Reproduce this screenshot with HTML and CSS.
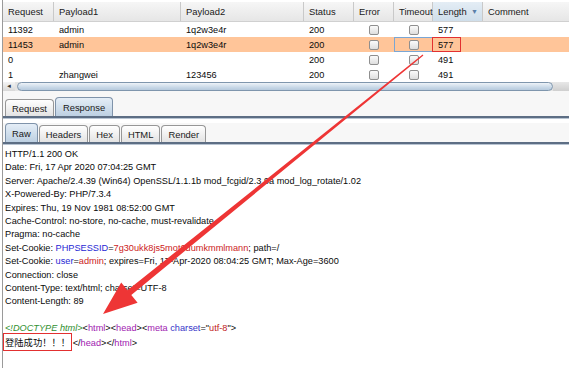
FILE: index.html
```html
<!DOCTYPE html>
<html>
<head>
<meta charset="utf-8">
<link rel="stylesheet" href="styles.css">
</head>
<body>
<div class="frame">
  <div class="grid head">
    <div class="hc">Request</div>
    <div class="hc">Payload1</div>
    <div class="hc">Payload2</div>
    <div class="hc">Status</div>
    <div class="hc">Error</div>
    <div class="hc">Timeout</div>
    <div class="hc sorted"><span>Length</span><span class="sort">▼</span></div>
    <div class="hc last">Comment</div>
  </div>
  <div class="grid row">
    <div class="c">11392</div><div class="c">admin</div><div class="c">1q2w3e4r</div><div class="c">200</div>
    <div class="c cb"><i class="box"></i></div><div class="c cb"><i class="box"></i></div><div class="c">577</div><div class="c"></div>
  </div>
  <div class="grid row sel">
    <div class="c">11453</div><div class="c">admin</div><div class="c">1q2w3e4r</div><div class="c">200</div>
    <div class="c cb"><i class="box"></i></div><div class="c cb focus"><i class="box"></i></div><div class="c mark">577</div><div class="c"></div>
  </div>
  <div class="grid row">
    <div class="c">0</div><div class="c"></div><div class="c"></div><div class="c">200</div>
    <div class="c cb"><i class="box"></i></div><div class="c cb"><i class="box"></i></div><div class="c">491</div><div class="c"></div>
  </div>
  <div class="grid row">
    <div class="c">1</div><div class="c">zhangwei</div><div class="c">123456</div><div class="c">200</div>
    <div class="c cb"><i class="box"></i></div><div class="c cb"><i class="box"></i></div><div class="c">491</div><div class="c"></div>
  </div>
  <div class="hscroll">
    <div class="sbtn">◄</div>
    <div class="thumb"></div>
    <div class="track"></div>
  </div>
  <div class="tabbar main">
    <div class="tab">Request</div>
    <div class="tab on">Response</div>
  </div>
  <div class="tabbar sub">
    <div class="tab on">Raw</div>
    <div class="tab">Headers</div>
    <div class="tab">Hex</div>
    <div class="tab">HTML</div>
    <div class="tab">Render</div>
  </div>
  <div class="raw">
    <div class="ln">HTTP/1.1 200 OK</div>
    <div class="ln">Date: Fri, 17 Apr 2020 07:04:25 GMT</div>
    <div class="ln">Server: Apache/2.4.39 (Win64) OpenSSL/1.1.1b mod_fcgid/2.3.9a mod_log_rotate/1.02</div>
    <div class="ln">X-Powered-By: PHP/7.3.4</div>
    <div class="ln">Expires: Thu, 19 Nov 1981 08:52:00 GMT</div>
    <div class="ln">Cache-Control: no-store, no-cache, must-revalidate</div>
    <div class="ln">Pragma: no-cache</div>
    <div class="ln">Set-Cookie: <span class="ck">PHPSESSID</span>=<span class="cv">7g30ukk8js5mot6dumkmmlmann</span>; path=/</div>
    <div class="ln">Set-Cookie: <span class="ck">user</span>=<span class="cv">admin</span>; expires=Fri, 17-Apr-2020 08:04:25 GMT; Max-Age=3600</div>
    <div class="ln">Connection: close</div>
    <div class="ln">Content-Type: text/html; charset=UTF-8</div>
    <div class="ln">Content-Length: 89</div>
    <div class="ln">&nbsp;</div>
    <div class="ln"><span class="dt">&lt;!DOCTYPE html&gt;</span>&lt;<span class="tg">html</span>&gt;&lt;<span class="tg">head</span>&gt;&lt;<span class="tg">meta</span> <span class="at">charset</span>=&quot;<span class="av">utf-8</span>&quot;&gt;</div>
    <div class="ln"><span class="zh">登陆成功！！！</span> &lt;/<span class="tg">head</span>&gt;&lt;/<span class="tg">html</span>&gt;</div>
  </div>
</div>
<svg class="overlay" width="569" height="368" viewBox="0 0 569 368">
  <polygon fill="#ee3535" points="423.4,55.4 131.3,294.9 137.6,302.7 103,314 121.2,282.5 127.5,290.3 422.6,54.6"/>
</svg>
</body>
</html>
```
FILE: styles.css
```css
html, body {
  margin: 0;
  padding: 0;
  background: #ffffff;
}
body {
  width: 569px;
  height: 368px;
  overflow: hidden;
  position: relative;
  font-family: "Liberation Sans", Arial, sans-serif;
  font-size: 9.2px;
  color: #0a0a0a;
}
.frame {
  margin-left: 2px;
  padding-top: 2px;
  border-left: 1px solid #9a9a9a;
  height: 366px;
}
.grid {
  display: grid;
  grid-template-columns: 51px 127px 123px 50px 40px 39px 50px 1fr;
}
.head {
  height: 20px;
  background: linear-gradient(#f6f6f6, #e6e6e6);
  border-bottom: 1px solid #d0d0d0;
  box-sizing: border-box;
}
.hc {
  display: flex;
  align-items: center;
  padding-left: 5px;
  border-right: 1px solid #c9c9c9;
  box-sizing: border-box;
  font-size: 9.4px;
  color: #1a1a1a;
}
.hc.last { border-right: none; }
.sorted {
  background: linear-gradient(#e4edf5, #cfdeea);
  justify-content: space-between;
  padding-right: 4px;
}
.sort {
  color: #5a7ea8;
  font-size: 7px;
}
.row {
  height: 15px;
}
.c {
  display: flex;
  align-items: center;
  padding-left: 5px;
  box-sizing: border-box;
  white-space: nowrap;
}
.sel { background: #ffc599; }
.cb {
  justify-content: center;
  padding-left: 0;
}
.box {
  display: block;
  width: 10px;
  height: 10px;
  box-sizing: border-box;
  border: 1px solid #8f8f8f;
  border-radius: 2px;
  background: linear-gradient(#fbfbfb, #dedede);
}
.focus { border: 1px solid #7aa6d4; }
.mark {
  border: 1px solid #e23030;
  margin-left: -1px;
  margin-right: 22px;
  padding-left: 5px;
}
.hscroll {
  display: flex;
  height: 9px;
  background: #e4e4e4;
}
.sbtn {
  width: 12px;
  font-size: 6px;
  line-height: 9px;
  color: #333;
  text-align: center;
  background: linear-gradient(#f4f4f4, #d8d8d8);
}
.thumb {
  width: 536px;
  margin-left: 2px;
  border: 1px solid #7f96ad;
  border-radius: 5px;
  box-sizing: border-box;
  background: linear-gradient(#eef3f8, #c9d9e8 60%, #b7cadd);
}
.track {
  flex: 1;
  background: linear-gradient(#e8e8e8, #cfcfcf);
}
.tabbar {
  display: flex;
  align-items: flex-end;
  gap: 1px;
  padding-left: 2px;
  background: #f7f7f7;
  border-bottom: 2px solid #5d6e84;
  box-shadow: 0 1px 0 #b8c4d2;
}
.main { height: 25px; }
.sub { height: 19px; margin-top: 5px; }
.tab {
  height: 16px;
  padding: 0 6px;
  display: flex;
  align-items: center;
  border: 1px solid #979797;
  border-bottom: none;
  border-radius: 4px 4px 0 0;
  background: linear-gradient(#ffffff, #e3e3e3);
  color: #1a1a1a;
  font-size: 9.4px;
}
.tab.on {
  height: 18px;
  background: linear-gradient(#e5eef7, #bdd0e2);
  border-color: #7f93aa;
}
.main .tab { padding: 0 6px; }
.main .tab.on { padding: 0 7px; }
.raw {
  padding: 4px 0 0 2px;
  line-height: 13.4px;
  white-space: nowrap;
}
.ck { color: #2727d4; }
.cv { color: #cc2222; }
.dt { color: #2f8f2f; font-style: italic; }
.tg { color: #a020b0; }
.at { color: #3535c8; }
.av { color: #c02020; }
.zh {
  font-family: "Noto Sans CJK SC", sans-serif;
  font-size: 9.3px;
  outline: 1px solid #e23030;
  outline-offset: 1px;
}
.overlay {
  position: absolute;
  left: 0;
  top: 0;
  pointer-events: none;
}
```
